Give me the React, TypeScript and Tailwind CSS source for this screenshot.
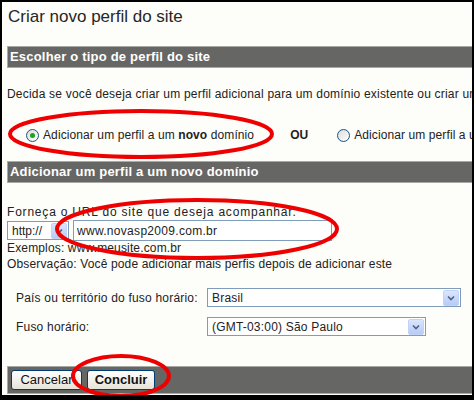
import React from 'react';

const FONT = { fontFamily: '"Liberation Sans", Arial, sans-serif' };

function Bar({ children }: { children: React.ReactNode }) {
  return (
    <div className="ml-[5px] h-[22px] bg-[#666764] border border-[#a9a9a5] border-r-0 flex items-center pl-[2px] text-white font-bold text-[13px] tracking-[0.2px]">
      {children}
    </div>
  );
}

function Chevron() {
  return (
    <div className="w-[16px] h-[16px] rounded-[2px] bg-gradient-to-b from-[#dbe6fd] to-[#b6cbf7] border border-[#c3d3f7] flex items-center justify-center">
      <svg width="8" height="6" viewBox="0 0 8 6">
        <path d="M1 1.5 L4 4.5 L7 1.5" stroke="#4d6185" strokeWidth="1.6" fill="none" />
      </svg>
    </div>
  );
}

function Select({ value, width }: { value: string; width: string }) {
  return (
    <div className={`${width} h-[19px] bg-white border border-[#7f9db9] flex items-center justify-between pl-[4px] pr-[1px]`}>
      <span className="text-[12px] text-[#222] tracking-[0.2px]">{value}</span>
      <Chevron />
    </div>
  );
}

function Radio({ checked }: { checked?: boolean }) {
  return (
    <span className="w-[13px] h-[13px] rounded-full border border-[#1c5180] bg-gradient-to-br from-[#dcdcd6] to-white flex items-center justify-center">
      {checked && <span className="w-[5px] h-[5px] rounded-full bg-[#21a121]" />}
    </span>
  );
}

function XpButton({ children, bold, width }: { children: React.ReactNode; bold?: boolean; width: string }) {
  return (
    <button className={`${width} h-[20px] rounded-[3px] border border-[#003c74] bg-gradient-to-b from-white to-[#e6e4d8] text-[13px] leading-[16px] text-[#111] ${bold ? 'font-bold' : ''}`}>
      {children}
    </button>
  );
}

export default function App() {
  return (
    <div className="w-[474px] h-[400px] bg-black pt-[2px] pl-[2px] pr-[2px]" style={FONT}>
      <div className="relative w-[470px] h-[393px] bg-[#fdfdf9] overflow-hidden text-[#222]">
        <h1 className="pl-[6px] pt-[5px] text-[17px] leading-[20px] text-[#262626]">Criar novo perfil do site</h1>

        <div className="mt-[19px]">
          <Bar>Escolher o tipo de perfil do site</Bar>
        </div>

        <p className="mt-[19px] pl-[5px] text-[12px] leading-[14px] whitespace-nowrap tracking-[0.2px]">
          Decida se você deseja criar um perfil adicional para um domínio existente ou criar um novo perfil
        </p>

        <div className="mt-[27px] flex items-center text-[12px] leading-[14px] whitespace-nowrap">
          <div className="ml-[24px] flex items-center gap-[4px]">
            <Radio checked />
            <span className="tracking-[0.1px]">
              Adicionar um perfil a um <b>novo</b> domínio
            </span>
          </div>
          <span className="ml-[36px] font-bold">OU</span>
          <div className="ml-[29px] flex items-center gap-[4px]">
            <Radio />
            <span className="tracking-[0.1px]">Adicionar um perfil a um domínio existente</span>
          </div>
        </div>

        <div className="mt-[19px]">
          <Bar>Adicionar um perfil a um novo domínio</Bar>
        </div>

        <div className="pl-[5px] text-[12px] leading-[14px]">
          <p className="mt-[22px] tracking-[0.8px]">Forneça o URL do site que deseja acompanhar.</p>
          <div className="mt-[1px] flex items-center gap-[4px]">
            <div className="w-[62px] h-[19px] bg-white border border-[#7f9db9] flex items-center justify-between pl-[4px] pr-[1px]">
              <span>http://</span>
              <Chevron />
            </div>
            <div className="w-[259px] h-[21px] bg-white border border-[#7f9db9] flex items-center pl-[3px]">
              <span className="tracking-[0.3px]">www.novasp2009.com.br</span>
            </div>
          </div>
          <p className="leading-[15px] tracking-[0.15px]">Exemplos: www.meusite.com.br</p>
          <p className="leading-[16px] tracking-[0.15px]">Observação: Você pode adicionar mais perfis depois de adicionar este</p>
        </div>

        <div className="mt-[16px] pl-[14px] grid grid-cols-[191px_1fr] gap-y-[10px] items-center text-[12px]">
          <span className="tracking-[0.2px]">País ou território do fuso horário:</span>
          <Select value="Brasil" width="w-[254px]" />
          <span className="tracking-[0.2px]">Fuso horário:</span>
          <Select value="(GMT-03:00) São Paulo" width="w-[219px]" />
        </div>

        <div className="mt-[30px] ml-[5px] h-[28px] bg-[#666764] border border-[#a9a9a5] border-r-0 flex items-center gap-[5px] pl-[3px]">
          <XpButton width="w-[71px]">Cancelar</XpButton>
          <XpButton bold width="w-[68px]">Concluir</XpButton>
        </div>

        <svg className="absolute inset-0 pointer-events-none" width="470" height="393" viewBox="2 2 470 393">
          <ellipse cx="141" cy="134" rx="131" ry="23" fill="none" stroke="#ee0000" strokeWidth="4" />
          <ellipse cx="197" cy="229" rx="140" ry="29" fill="none" stroke="#ee0000" strokeWidth="4" />
          <ellipse cx="121" cy="376" rx="48" ry="20" fill="none" stroke="#ee0000" strokeWidth="4" />
        </svg>
      </div>
    </div>
  );
}
